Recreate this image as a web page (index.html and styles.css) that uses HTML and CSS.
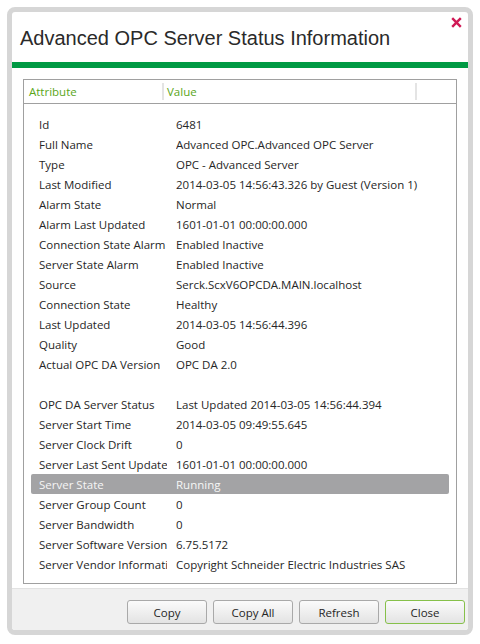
FILE: index.html
```html
<!DOCTYPE html>
<html>
<head>
<meta charset="utf-8">
<link rel="stylesheet" href="styles.css">
</head>
<body>
<div class="dialog">
  <div class="titlebar">
    <h1 class="title">Advanced OPC Server Status Information</h1>
    <svg class="close-x" width="11" height="11" viewBox="0 0 11 11"><path d="M1.2 1.2 L9.8 9.8 M9.8 1.2 L1.2 9.8" stroke="#d01a56" stroke-width="2.4" fill="none"/></svg>
  </div>
  <div class="greenbar"></div>
  <div class="content">
    <div class="grid">
      <div class="grid-head">
        <div class="hcell hcell-attr">Attribute</div>
        <div class="hcell hcell-val">Value</div>
        <div class="hcell hcell-end"></div>
      </div>
      <div class="grid-body">
        <div class="row"><div class="attr">Id</div><div class="val">6481</div></div>
        <div class="row"><div class="attr">Full Name</div><div class="val">Advanced OPC.Advanced OPC Server</div></div>
        <div class="row"><div class="attr">Type</div><div class="val">OPC - Advanced Server</div></div>
        <div class="row"><div class="attr">Last Modified</div><div class="val">2014-03-05 14:56:43.326 by Guest (Version 1)</div></div>
        <div class="row"><div class="attr">Alarm State</div><div class="val">Normal</div></div>
        <div class="row"><div class="attr">Alarm Last Updated</div><div class="val">1601-01-01 00:00:00.000</div></div>
        <div class="row"><div class="attr">Connection State Alarm</div><div class="val">Enabled Inactive</div></div>
        <div class="row"><div class="attr">Server State Alarm</div><div class="val">Enabled Inactive</div></div>
        <div class="row"><div class="attr">Source</div><div class="val">Serck.ScxV6OPCDA.MAIN.localhost</div></div>
        <div class="row"><div class="attr">Connection State</div><div class="val">Healthy</div></div>
        <div class="row"><div class="attr">Last Updated</div><div class="val">2014-03-05 14:56:44.396</div></div>
        <div class="row"><div class="attr">Quality</div><div class="val">Good</div></div>
        <div class="row"><div class="attr">Actual OPC DA Version</div><div class="val">OPC DA 2.0</div></div>
        <div class="row"><div class="attr"></div><div class="val"></div></div>
        <div class="row"><div class="attr">OPC DA Server Status</div><div class="val">Last Updated 2014-03-05 14:56:44.394</div></div>
        <div class="row"><div class="attr">Server Start Time</div><div class="val">2014-03-05 09:49:55.645</div></div>
        <div class="row"><div class="attr">Server Clock Drift</div><div class="val">0</div></div>
        <div class="row"><div class="attr">Server Last Sent Update</div><div class="val">1601-01-01 00:00:00.000</div></div>
        <div class="row row-selected"><div class="attr">Server State</div><div class="val">Running</div></div>
        <div class="row"><div class="attr">Server Group Count</div><div class="val">0</div></div>
        <div class="row"><div class="attr">Server Bandwidth</div><div class="val">0</div></div>
        <div class="row"><div class="attr">Server Software Version</div><div class="val">6.75.5172</div></div>
        <div class="row"><div class="attr">Server Vendor Information</div><div class="val">Copyright Schneider Electric Industries SAS</div></div>
      </div>
    </div>
  </div>
  <div class="footer">
    <button class="btn">Copy</button>
    <button class="btn">Copy All</button>
    <button class="btn">Refresh</button>
    <button class="btn btn-default">Close</button>
  </div>
</div>
</body>
</html>
```

FILE: styles.css
```css
html, body {
  margin: 0;
  padding: 0;
  background: #ffffff;
}
body {
  width: 480px;
  height: 644px;
  font-family: "Open Sans", "Liberation Sans", sans-serif;
  color: #262626;
}
.dialog {
  position: relative;
  margin: 7px 0 0 7px;
  width: 456px;
  height: 618px;
  border: 5px solid #d6d6d6;
  border-radius: 8px;
  background: #ffffff;
  display: flex;
  flex-direction: column;
  overflow: hidden;
}
.titlebar {
  height: 50px;
  box-sizing: border-box;
  padding: 14px 0 0 8px;
}
.title {
  margin: 0;
  font-family: "Liberation Sans", Arial, sans-serif;
  font-weight: normal;
  font-size: 20px;
  line-height: 24px;
  color: #2a2a2a;
}
.close-x {
  position: absolute;
  top: 5px;
  right: 6px;
}
.greenbar {
  height: 6px;
  background: #009a44;
}
.content {
  padding: 11px 11px 0 11px;
}
.grid {
  border: 1px solid #a0a0a0;
  height: 503px;
  display: flex;
  flex-direction: column;
}
.grid-head {
  display: flex;
  height: 23px;
  border-bottom: 1px solid #a0a0a0;
  font-size: 11.5px;
  line-height: 23px;
  color: #5aa619;
}
.hcell {
  position: relative;
  box-sizing: border-box;
}
.hcell-attr {
  width: 140px;
  padding-left: 5px;
  border-right: 2px solid #e4e4e4;
  margin: 3px 0;
  line-height: 17px;
}
.hcell-val {
  width: 253px;
  padding-left: 3px;
  border-right: 2px solid #e4e4e4;
  margin: 3px 0;
  line-height: 17px;
}
.hcell-end {
  flex: 1;
}
.grid-body {
  padding: 10px 7px 0 7px;
}
.row {
  display: flex;
  height: 20px;
  font-size: 11.5px;
  line-height: 21px;
  white-space: nowrap;
}
.attr {
  width: 136px;
  padding-left: 8px;
  margin-right: 9px;
  overflow: hidden;
  box-sizing: border-box;
}
.val {
  flex: 1;
  overflow: hidden;
}
.row-selected {
  background: #a3a3a5;
  color: #f6f6f6;
  border-radius: 2px;
}
.footer {
  margin-top: 4px;
  flex: 1;
  border-top: 1px solid #e2e2e2;
  background: #f0f0f0;
  display: flex;
  justify-content: flex-end;
  align-items: flex-start;
  gap: 6px;
  padding: 11px 3px 0 0;
}
.btn {
  width: 80px;
  height: 24px;
  padding: 0;
  border: 1px solid #a9a9a9;
  border-radius: 3px;
  background: linear-gradient(#fbfbfb, #e3e3e3);
  font-family: "Open Sans", "Liberation Sans", sans-serif;
  font-size: 11.5px;
  color: #262626;
}
.btn-default {
  border-color: #86c04a;
}
```
